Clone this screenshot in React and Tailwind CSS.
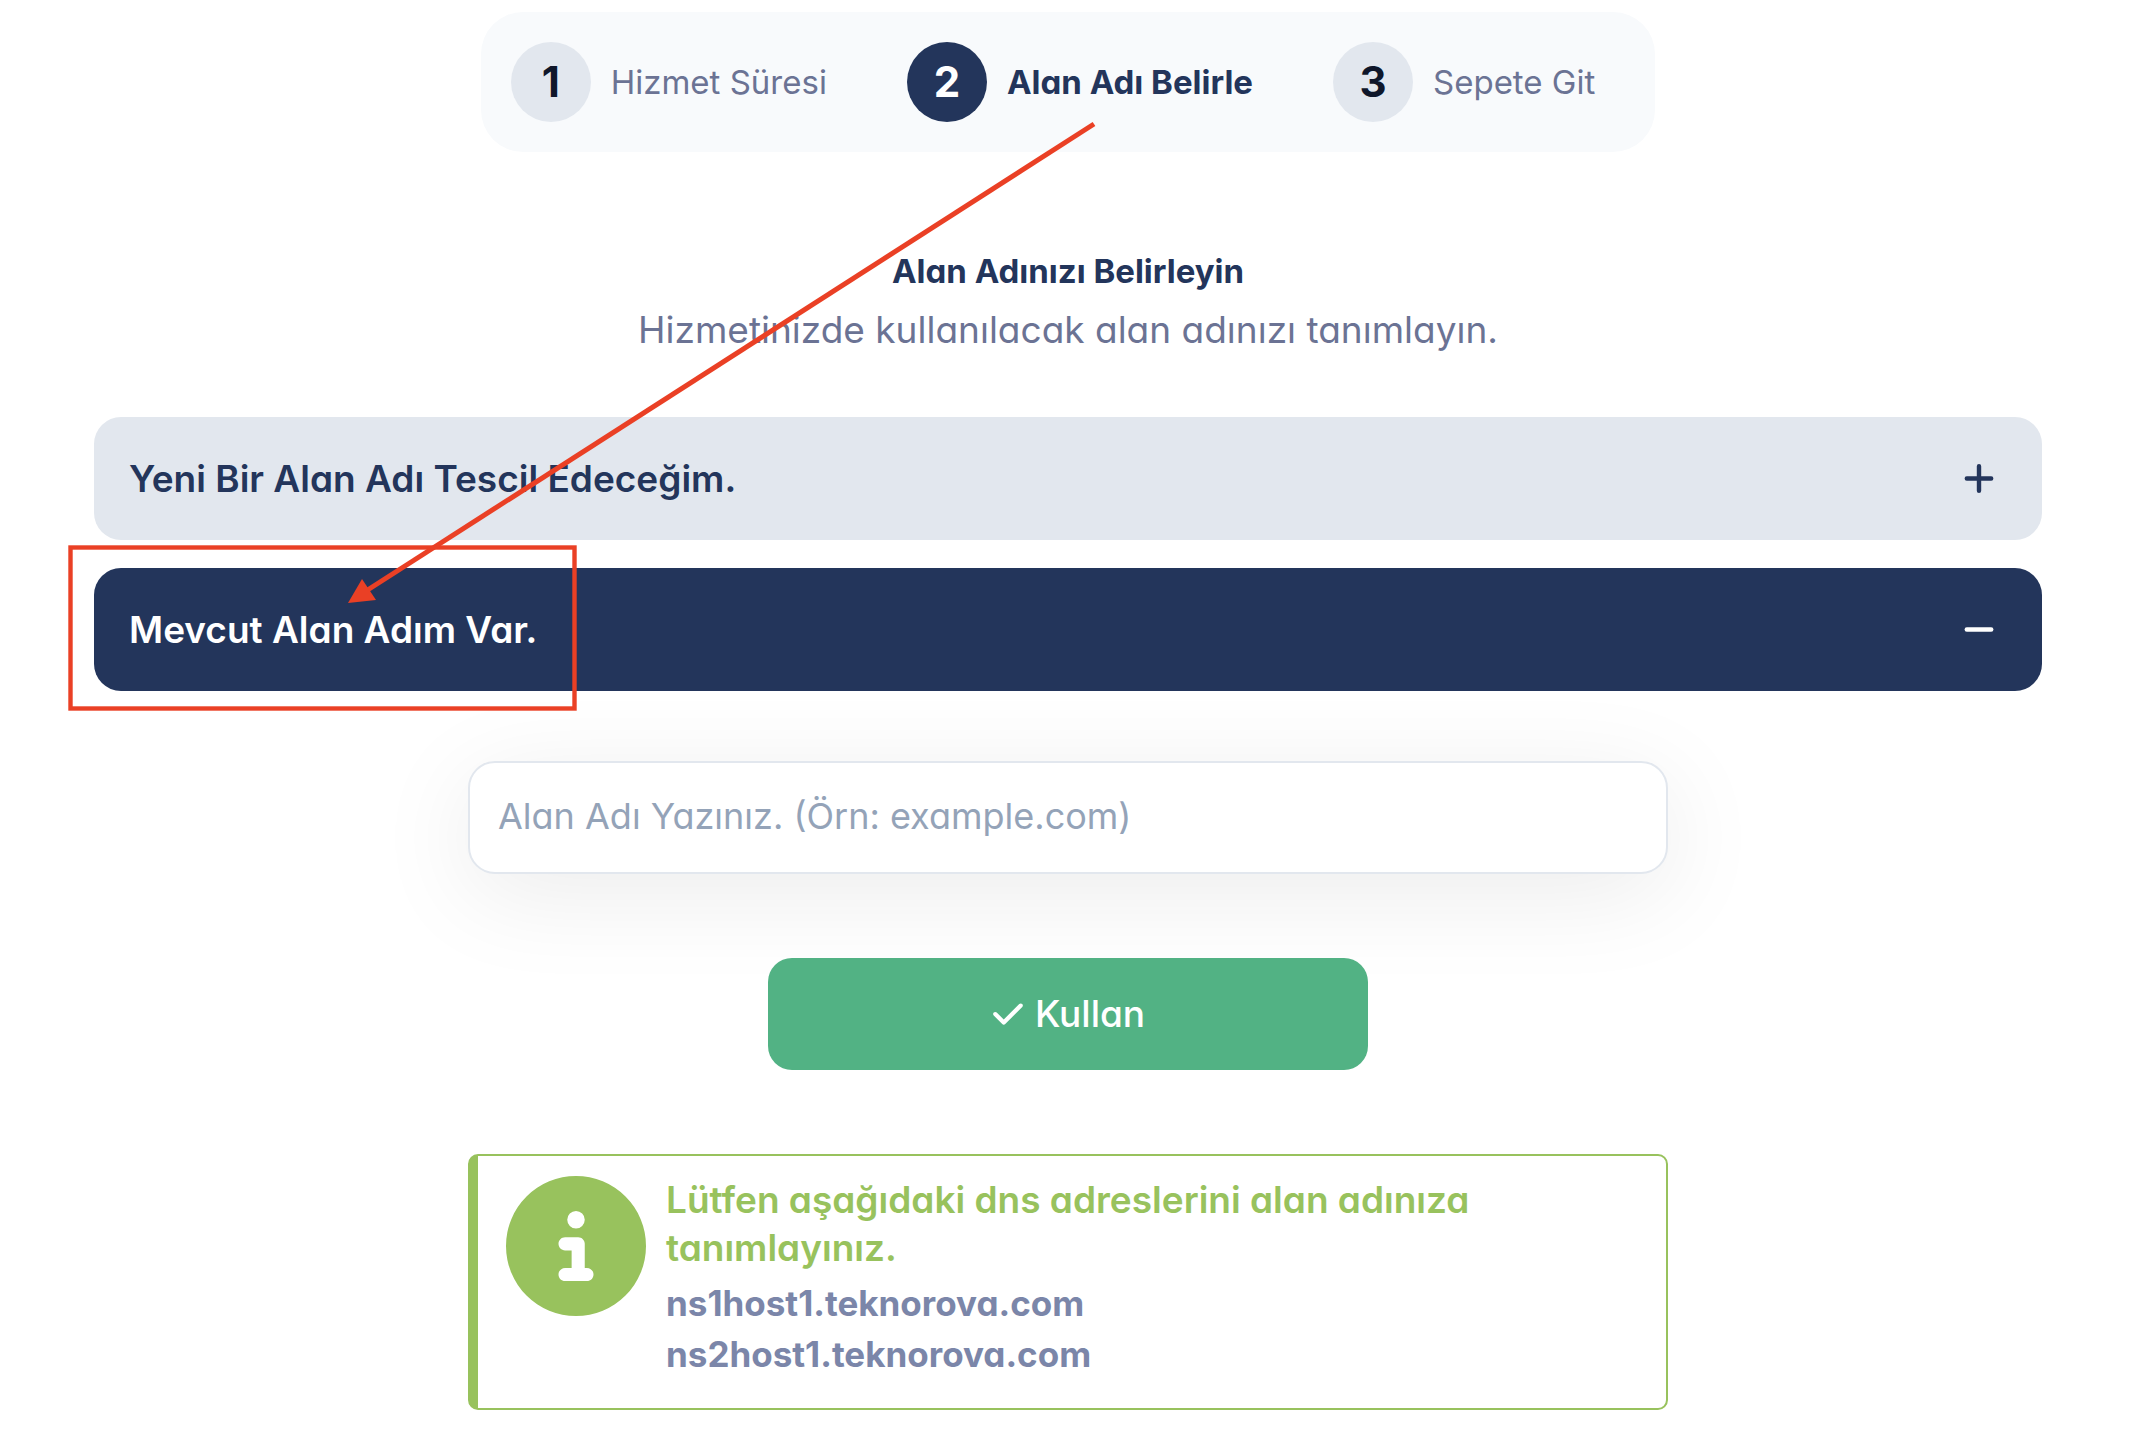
import { FaCheck, FaCircleInfo } from "react-icons/fa6";

const steps = [
  { no: 1, label: "Hizmet Süresi" },
  { no: 2, label: "Alan Adı Belirle", active: true },
  { no: 3, label: "Sepete Git" },
];

const nameservers = ["ns1host1.teknorova.com", "ns2host1.teknorova.com"];

const Stepper = () => (
  <ol className="mx-auto flex w-fit items-center gap-20 rounded-[42px] bg-slate-50 py-[30px] pl-[30px] pr-[60px]">
    {steps.map((step) => (
      <li
        key={step.no}
        aria-current={step.active ? "step" : undefined}
        className="flex items-center gap-5"
      >
        <span
          className={
            step.active
              ? "flex size-20 items-center justify-center rounded-full bg-[#23355b] text-[42px] leading-none font-bold text-white"
              : "flex size-20 items-center justify-center rounded-full bg-[#e2e7ee] text-[42px] leading-none font-bold text-[#0f172a]"
          }
        >
          {step.no}
        </span>
        <span
          className={
            step.active
              ? "text-[33px] leading-12 font-bold text-[#23355b]"
              : "text-[33px] leading-12 text-[#6b7394]"
          }
        >
          {step.label}
        </span>
      </li>
    ))}
  </ol>
);

const AccordionHeader = ({ title, open }) => (
  <h3>
    <button
      type="button"
      aria-expanded={open}
      className={
        open
          ? "flex w-full items-center justify-between rounded-[27px] bg-[#23355b] py-9 pl-[35px] pr-12 text-[37px] leading-[51px] font-semibold text-white"
          : "flex w-full items-center justify-between rounded-[27px] bg-[#e2e7ee] py-9 pl-[35px] pr-12 text-[37px] leading-[51px] font-semibold text-[#23355b]"
      }
    >
      {title}
      <svg
        viewBox="0 0 30 30"
        className="size-[30px]"
        fill="none"
        stroke="currentColor"
        strokeWidth="4.4"
        strokeLinecap="round"
        aria-hidden="true"
      >
        <path d={open ? "M2.8 14.5h24.4" : "M2.8 14.5h24.4M15 2.3v24.4"} />
      </svg>
    </button>
  </h3>
);

// Red frame and arrow drawn over the page
const Annotation = () => (
  <svg
    className="pointer-events-none absolute top-0 left-1/2 h-[720px] w-[2138px] -translate-x-1/2"
    viewBox="0 0 2138 720"
    aria-hidden="true"
  >
    <rect x="70.5" y="547.5" width="504" height="161" fill="none" stroke="#ea4025" strokeWidth="4.4" />
    <path d="M1094 124L366 591" stroke="#ea4025" strokeWidth="5" />
    <path d="M348 603L362 579L376 600Z" fill="#ea4025" />
  </svg>
);

export default function App() {
  return (
    <main className="relative overflow-hidden bg-white pt-3 pr-24 pb-10 pl-[94px] font-['Inter',sans-serif] [font-feature-settings:'cv11']">
      <Stepper />

      <header className="mt-24 text-center">
        <h1 className="text-[33px] leading-[46px] font-bold text-[#23355b]">
          Alan Adınızı Belirleyin
        </h1>
        <p className="mt-2 text-[37px] leading-14 text-[#6b7394]">
          Hizmetinizde kullanılacak alan adınızı tanımlayın.
        </p>
      </header>

      <section className="mt-[59px] flex flex-col gap-7">
        <AccordionHeader title="Yeni Bir Alan Adı Tescil Edeceğim." open={false} />
        <AccordionHeader title="Mevcut Alan Adım Var." open />
      </section>

      <form className="mx-auto mt-[70px] max-w-[1200px]" onSubmit={(e) => e.preventDefault()}>
        <input
          type="text"
          aria-label="Alan Adı"
          placeholder="Alan Adı Yazınız. (Örn: example.com)"
          className="block h-[113px] w-full rounded-[27px] border-2 border-[#e2e7ee] bg-white px-7 pb-1 text-4xl text-[#23355b] shadow-[0_20px_100px_rgba(0,0,0,0.08)] outline-none placeholder:text-[#94a3b8]"
        />
        <button
          type="submit"
          className="relative mx-auto mt-[84px] flex h-28 w-1/2 items-center justify-center gap-2.5 rounded-3xl bg-[#52b284] text-[37px] font-medium text-white"
        >
          <FaCheck className="size-[34px]" aria-hidden="true" />
          Kullan
        </button>
      </form>

      <aside className="mx-auto mt-[84px] flex max-w-[1200px] gap-5 rounded-[10px] border-2 border-l-10 border-[#98c25d] pt-5 pr-7 pb-7 pl-7">
        <FaCircleInfo className="size-[140px] shrink-0 text-[#98c25d]" aria-hidden="true" />
        <div>
          <p className="max-w-[840px] text-[37px] leading-12 font-semibold text-[#98c25d]">
            Lütfen aşağıdaki dns adreslerini alan adınıza tanımlayınız.
          </p>
          <ul className="mt-1.5 text-[35px] leading-[51px] font-bold text-[#7b86a9]">
            {nameservers.map((ns) => (
              <li key={ns}>{ns}</li>
            ))}
          </ul>
        </div>
      </aside>

      <Annotation />
    </main>
  );
}
